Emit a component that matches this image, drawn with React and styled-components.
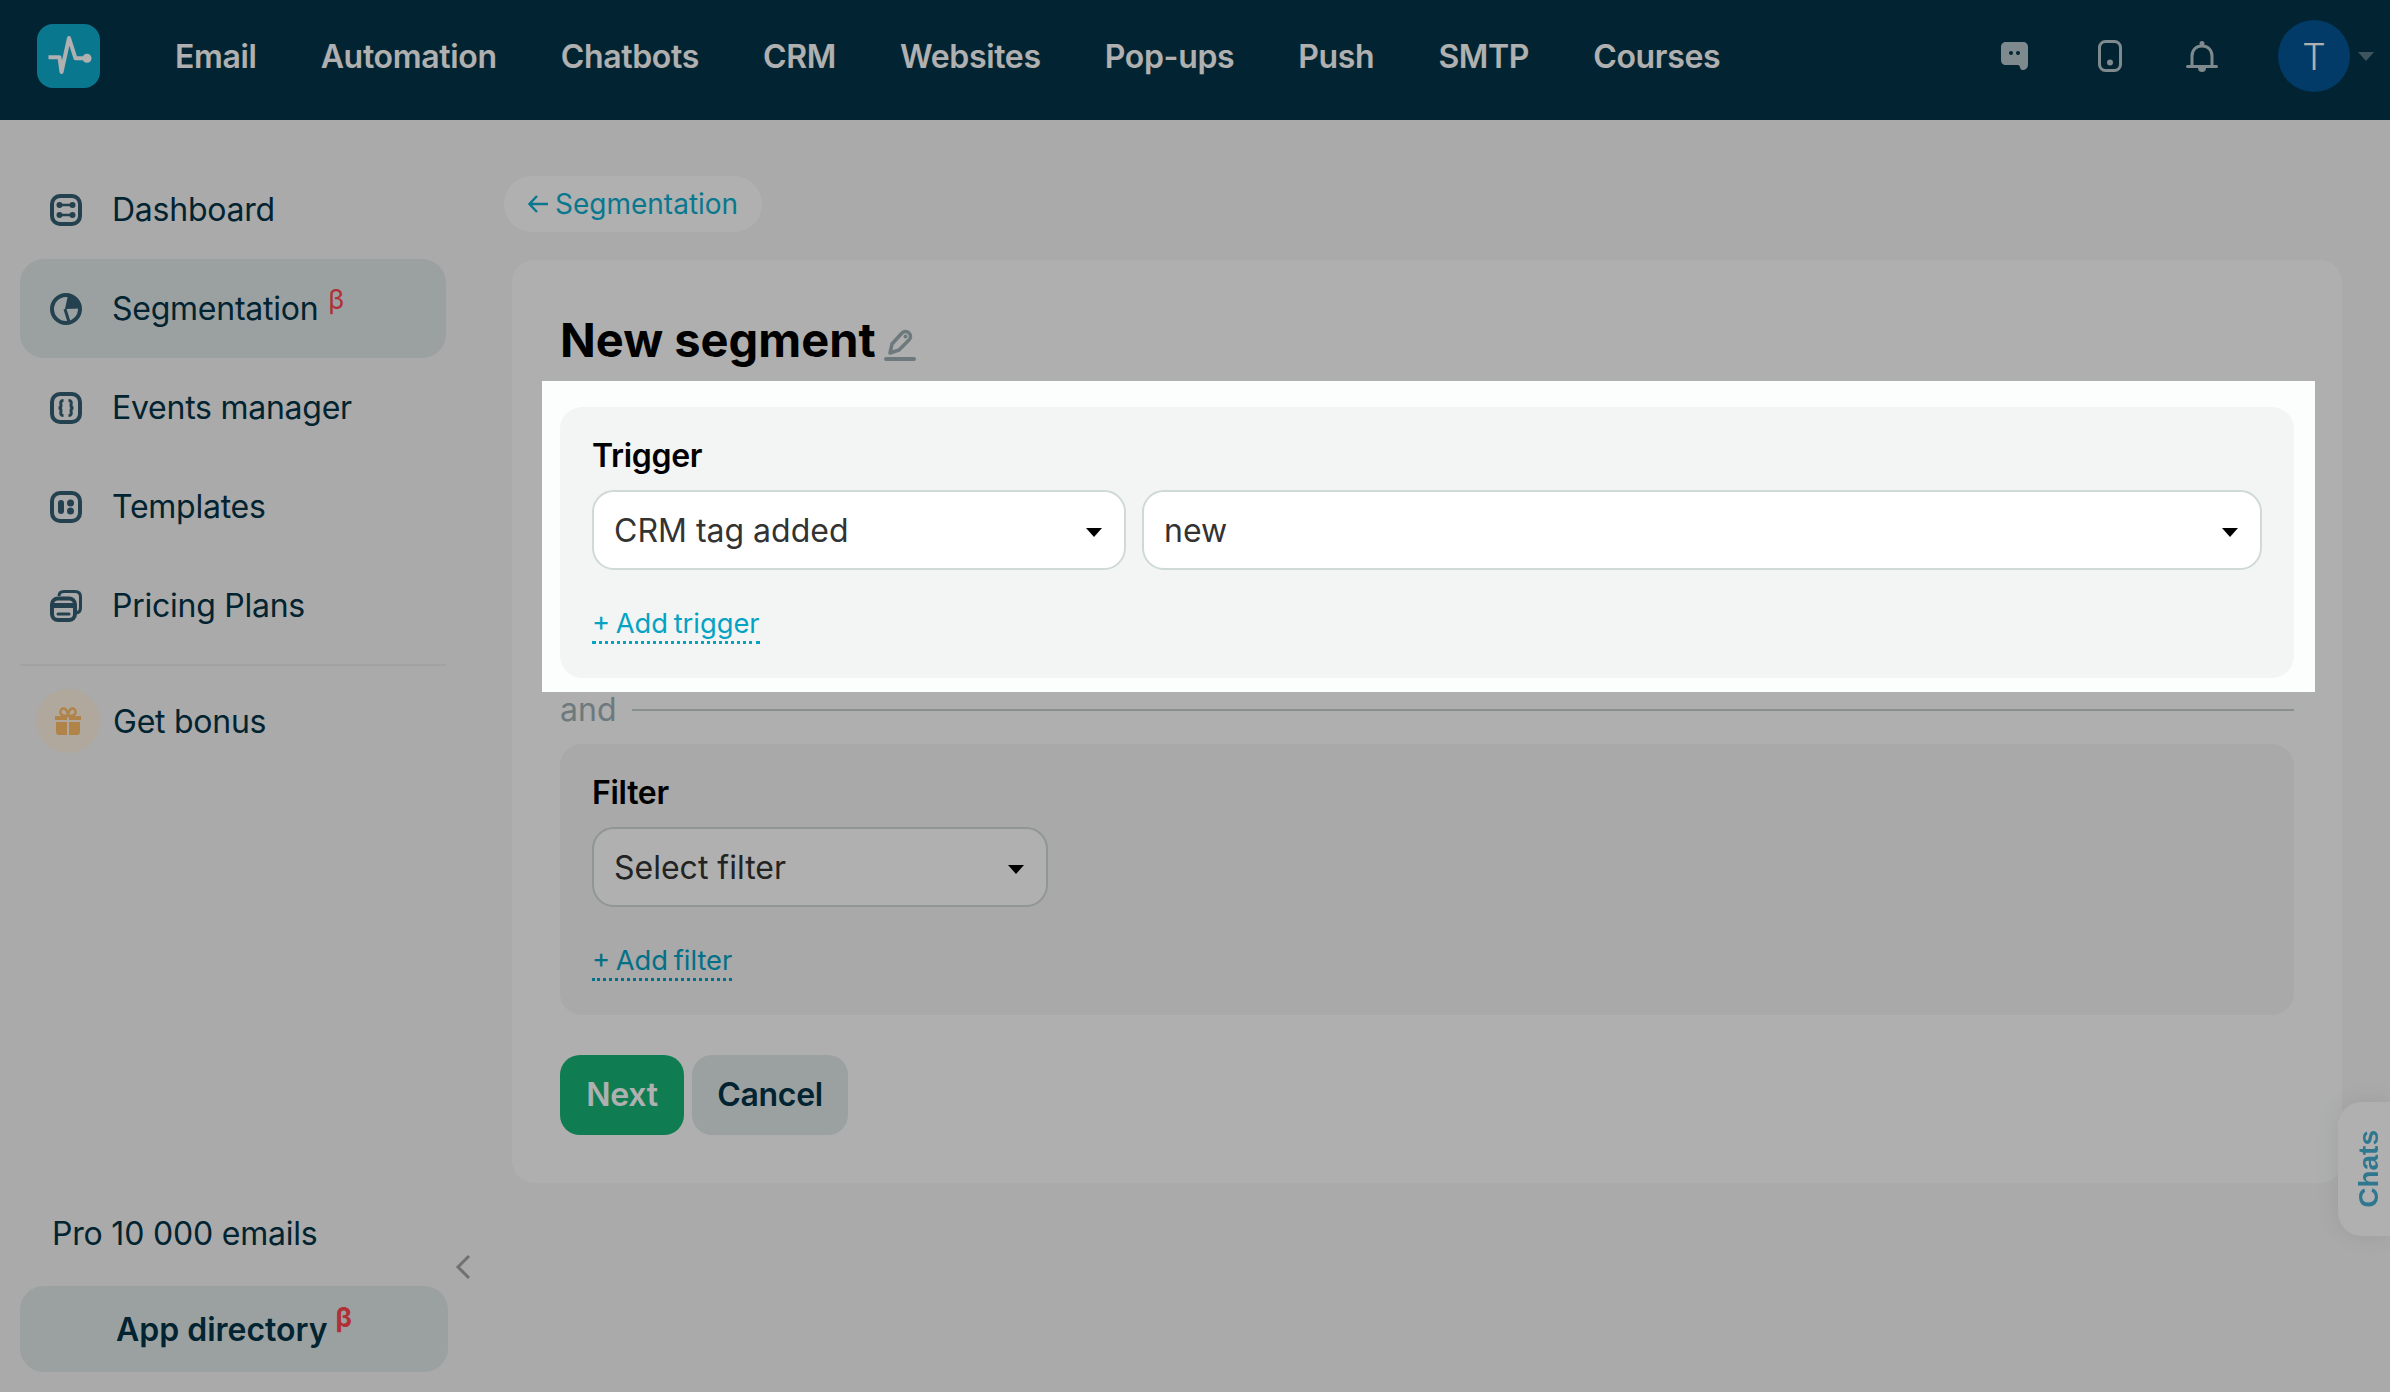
import React from "react";
import styled, { createGlobalStyle } from "styled-components";

const GlobalStyle = createGlobalStyle`
  html, body {
    margin: 0;
    height: 100%;
    overflow: hidden;
    background: #f5f6f5;
    font-family: Inter, "Noto Sans", sans-serif;
    color: #043447;
  }
  * { box-sizing: border-box; }
`;

const Page = styled.div`
  height: 100vh;
  display: flex;
  flex-direction: column;
`;

const TopBar = styled.header`
  height: 120px;
  flex: none;
  display: flex;
  align-items: center;
  padding: 0 16px 8px 37px;
  background: #043447;
`;

const Logo = styled.div`
  width: 63px;
  height: 64px;
  border-radius: 16px;
  background: #0eaecf;
  svg { display: block; }
`;

const TopNav = styled.nav`
  display: flex;
  gap: 64px;
  margin-left: 75px;
`;

const TopLink = styled.a`
  font-size: 32px;
  font-weight: 600;
  letter-spacing: -0.33px;
  color: #fff;
`;

const TopActions = styled.div`
  margin-left: auto;
  display: flex;
  align-items: center;
  gap: 60px;
  color: #b9c8ce;
  svg { display: block; }
`;

const Avatar = styled.div`
  display: flex;
  align-items: center;
  gap: 8px;
`;

const AvatarCircle = styled.div`
  width: 72px;
  height: 72px;
  border-radius: 50%;
  background: #045497;
  color: #fff;
  font-size: 37px;
  font-weight: 300;
  display: flex;
  align-items: center;
  justify-content: center;
`;

const AvatarCaret = styled.span`
  border: 8px solid transparent;
  border-top: 9px solid #5a7b8b;
  border-bottom: 0;
`;

const Body = styled.div`
  flex: 1;
  display: flex;
  min-height: 0;
`;

const Sidebar = styled.aside`
  position: relative;
  width: 466px;
  flex: none;
  display: flex;
  flex-direction: column;
  padding: 40px 20px 20px;
`;

const SideItem = styled.a`
  height: 99px;
  display: flex;
  align-items: center;
  gap: 30px;
  padding-left: 30px;
  border-radius: 24px;
  font-size: 32px;
  letter-spacing: -0.25px;
  background: ${(p) => (p.$active ? "#e1e9e9" : "transparent")};
  svg { flex: none; display: block; color: #355f75; }
`;

const Beta = styled.sup`
  align-self: flex-start;
  margin: 27px 0 0 -20px;
  font-size: 27px;
  line-height: 1;
  color: #ff4651;
  font-weight: ${(p) => (p.$bold ? 700 : 400)};
`;

const SideDivider = styled.div`
  height: 2px;
  margin: 9px 0 0;
  background: #e9ecec;
`;

const BonusItem = styled.a`
  display: flex;
  align-items: center;
  gap: 13px;
  margin-top: 23px;
  padding-left: 16px;
  font-size: 32px;
  letter-spacing: -0.25px;
`;

const BonusCircle = styled.span`
  width: 64px;
  height: 64px;
  border-radius: 50%;
  background: #fff3e4;
  display: flex;
  align-items: center;
  justify-content: center;
  color: #ffc06a;
`;

const PlanName = styled.div`
  margin-top: auto;
  padding-left: 32px;
  font-size: 32px;
  letter-spacing: -0.2px;
  line-height: 40px;
`;

const CollapseToggle = styled.span`
  position: absolute;
  left: 454px;
  top: 1134px;
  color: #a3a6a6;
  svg { display: block; }
`;

const AppDirectory = styled.a`
  margin: 32px -2px 0 0;
  height: 86px;
  border-radius: 24px;
  background: #e1e9e9;
  display: flex;
  align-items: center;
  justify-content: center;
  gap: 8px;
  font-size: 32px;
  font-weight: 600;
  ${Beta} { margin: 18px 0 0 0; }
`;

const Content = styled.main`
  flex: 1;
  min-width: 0;
  padding: 56px 48px 0 38px;
`;

const BackLink = styled.a`
  display: inline-flex;
  align-items: center;
  height: 56px;
  padding: 0 24px;
  gap: 7px;
  border-radius: 28px;
  background: #fff;
  color: #0eaecf;
  font-size: 28px;
  svg { display: block; }
`;

const Card = styled.section`
  margin: 28px 0 0 8px;
  padding: 45px 48px 48px;
  border-radius: 22px;
  background: #fcfefd;
`;

const Title = styled.h1`
  margin: 0 0 32px;
  height: 70px;
  display: flex;
  align-items: center;
  gap: 8px;
  font-size: 47px;
  font-weight: 700;
  line-height: 70px;
  color: #000;
  svg { display: block; margin-top: 9px; color: #9eb0b4; }
`;

const Highlight = styled.div`
  position: relative;
  z-index: 2;
  margin: -26px -21px -14px -18px;
  padding: 26px 21px 14px 18px;
  background: #fcfefd;
  box-shadow: 0 0 0 4000px rgba(0, 0, 0, 0.31);
`;

const Panel = styled.div`
  padding: 29px 32px 34px;
  border-radius: 22px;
  background: #f3f5f4;
`;

const PanelLabel = styled.div`
  font-size: 32px;
  font-weight: 600;
  letter-spacing: -0.3px;
  line-height: 40px;
  color: #000;
`;

const SelectRow = styled.div`
  display: flex;
  gap: 16px;
  margin-top: 14px;
`;

const SelectBox = styled.div`
  flex: ${(p) => (p.$width ? `0 0 ${p.$width}px` : 1)};
  height: 80px;
  display: flex;
  align-items: center;
  justify-content: space-between;
  padding: 0 22px 0 20px;
  border: 2px solid #cfd9d7;
  border-radius: 22px;
  background: #fff;
  font-size: 32px;
  color: #333;
`;

const SelectCaret = styled.span`
  margin-top: 5px;
  border: 8px solid transparent;
  border-top: 9px solid #000;
  border-bottom: 0;
`;

const AddLink = styled.a`
  display: inline-block;
  margin-top: 35px;
  padding-top: 1px;
  font-size: 27.3px;
  word-spacing: -2px;
  line-height: 35px;
  color: #04a3c4;
  border-bottom: 3px dotted #04a3c4;
`;

const AndRow = styled.div`
  display: flex;
  align-items: center;
  gap: 16px;
  height: 42px;
  margin: 11px 0 13px;
  font-size: 32px;
  line-height: 38px;
  color: #a0b0b5;
  &::after {
    content: "";
    flex: 1;
    height: 2px;
    background: #c4cfcf;
  }
`;

const Actions = styled.div`
  display: flex;
  gap: 8px;
  margin-top: 40px;
`;

const Button = styled.button`
  height: 80px;
  width: ${(p) => p.$width}px;
  padding: 0 0 2px;
  border: 0;
  border-radius: 20px;
  font-family: inherit;
  font-size: 32px;
  font-weight: 600;
  letter-spacing: -0.3px;
  color: ${(p) => (p.$primary ? "#fff" : "#043447")};
  background: ${(p) => (p.$primary ? "#16b477" : "#e1e9e9")};
`;

const ChatsTab = styled.div`
  position: fixed;
  z-index: 1;
  right: 0;
  top: 1102px;
  width: 52px;
  height: 134px;
  padding-left: 10px;
  border-radius: 24px 0 0 24px;
  background: #fff;
  box-shadow: 0 0 24px rgba(0, 0, 0, 0.08);
  display: flex;
  align-items: center;
  justify-content: center;
  span {
    writing-mode: vertical-rl;
    transform: rotate(180deg);
    font-family: "Liberation Sans", Arial, sans-serif;
    font-size: 28px;
    font-weight: 700;
    color: #45adcf;
  }
`;

const PulseIcon = () => (
  <svg width="63" height="64" viewBox="0 0 63 64" fill="none">
    <path d="M11.5 33.3H22.5L24.5 48L32 14L38.5 34.3H47" stroke="#fff" strokeWidth="4" strokeLinejoin="round" />
    <circle cx="50" cy="34.3" r="4.5" fill="#fff" />
  </svg>
);

const ChatIcon = () => (
  <svg width="35" height="32" viewBox="0 0 35 32">
    <path d="M7 2H24C27 2 29 4 29 7V24C29 27.5 27.5 30 23.5 30C20.5 30 21.5 25 19 25H7C4 25 2 23 2 20V7C2 4 4 2 7 2Z" fill="currentColor" />
    <circle cx="12" cy="13" r="2" fill="#043447" />
    <circle cx="19" cy="13" r="2" fill="#043447" />
  </svg>
);

const PhoneIcon = () => (
  <svg width="32" height="32" viewBox="0 0 32 32" fill="none">
    <rect x="5.5" y="1.5" width="21" height="29" rx="6" stroke="currentColor" strokeWidth="3" />
    <circle cx="16" cy="22.5" r="3" fill="currentColor" />
  </svg>
);

const BellIcon = () => (
  <svg width="32" height="32" viewBox="0 0 32 32" fill="none">
    <path d="M6 26V16C6 10 10 6 16 6C22 6 26 10 26 16V26" stroke="currentColor" strokeWidth="3" />
    <path d="M1.5 26.5H30.5" stroke="currentColor" strokeWidth="3" strokeLinecap="round" />
    <circle cx="16" cy="3.5" r="2.5" fill="currentColor" />
    <path d="M12 28H20C20 31 18 32 16 32C14 32 12 31 12 28Z" fill="currentColor" />
  </svg>
);

const DashboardIcon = () => (
  <svg width="32" height="32" viewBox="0 0 32 32" fill="none">
    <rect x="2" y="2" width="28" height="28" rx="8" stroke="currentColor" strokeWidth="4" />
    <path d="M10 11H22M10 21H22" stroke="currentColor" strokeWidth="2.5" />
    <circle cx="9.5" cy="11" r="3" fill="currentColor" />
    <circle cx="22.500" cy="11" r="3" fill="currentColor" />
    <circle cx="9.5" cy="21" r="3" fill="currentColor" />
    <circle cx="22.500" cy="21" r="3" fill="currentColor" />
  </svg>
);

const SegmentIcon = () => (
  <svg width="32" height="32" viewBox="0 0 32 32" fill="none">
    <circle cx="16" cy="16" r="14" stroke="currentColor" strokeWidth="4" />
    <path d="M18 2C26 3 30 9 30.5 15.5L15 16L18 2Z" fill="currentColor" />
    <path d="M15 16L19 29" stroke="currentColor" strokeWidth="3" />
  </svg>
);

const EventsIcon = () => (
  <svg width="32" height="32" viewBox="0 0 32 32" fill="none">
    <rect x="2" y="2" width="28" height="28" rx="8" stroke="currentColor" strokeWidth="4" />
    <path d="M13.5 8.500C9.500 8.500 11 12 11 13.500C11 15 10 16 8.500 16C10 16 11 17 11 18.500C11 20 9.500 23.500 13.500 23.500" stroke="currentColor" strokeWidth="3" />
    <path d="M18.500 8.500C22.500 8.500 21 12 21 13.500C21 15 22 16 23.500 16C22 16 21 17 21 18.500C21 20 22.500 23.500 18.500 23.500" stroke="currentColor" strokeWidth="3" />
  </svg>
);

const TemplatesIcon = () => (
  <svg width="32" height="32" viewBox="0 0 32 32" fill="none">
    <rect x="2" y="2" width="28" height="28" rx="8" stroke="currentColor" strokeWidth="4" />
    <rect x="8" y="9" width="6" height="14" rx="3" fill="currentColor" />
    <circle cx="20.500" cy="12" r="3.500" fill="currentColor" />
    <circle cx="20.500" cy="20" r="3.500" fill="currentColor" />
  </svg>
);

const PricingIcon = () => (
  <svg width="32" height="32" viewBox="0 0 32 32" fill="none">
    <path d="M9 6C9 3 11 1.500 14 1.500H25C28.500 1.500 30.500 3.500 30.500 7V18C30.500 21 29 22.500 27 23" stroke="currentColor" strokeWidth="3" />
    <rect x="2" y="8.500" width="23" height="21.500" rx="6" stroke="currentColor" strokeWidth="4" />
    <path d="M2 13H25V18H2Z" fill="currentColor" />
    <path d="M8 24H19" stroke="currentColor" strokeWidth="3" strokeLinecap="round" />
  </svg>
);

const GiftIcon = () => (
  <svg width="28" height="28" viewBox="0 0 28 28" fill="currentColor">
    <path d="M1 9H13V13H1ZM15 9H27V13H15ZM2 15H13V28H5C3 28 2 27 2 25ZM15 15H26V25C26 27 25 28 23 28H15Z" />
    <path d="M14 9C11 9 7 9 6.500 6C6 3 8 1 10 1.500C12 2 14 5 14 9ZM14 9C14 5 16 2 18 1.500C20 1 22 3 21.500 6C21 9 17 9 14 9Z" fill="none" stroke="currentColor" strokeWidth="2.5" />
  </svg>
);

const PencilIcon = () => (
  <svg width="32" height="32" viewBox="0 0 32 32" fill="none">
    <path d="M6 24L8 15L18 4C20 2 23 2 25 4C27 6 27 9 25 11L15 21L6 24Z" stroke="currentColor" strokeWidth="3.500" strokeLinejoin="round" />
    <circle cx="21.500" cy="7.500" r="2" fill="currentColor" />
    <path d="M2 30H30" stroke="currentColor" strokeWidth="4" strokeLinecap="round" />
  </svg>
);

const BackArrow = () => (
  <svg width="20" height="18" viewBox="0 0 20 18" fill="none">
    <path d="M9 1L1.500 9L9 17M2 9H20" stroke="currentColor" strokeWidth="2.4" />
  </svg>
);

const ChevronLeft = () => (
  <svg width="18" height="26" viewBox="0 0 18 26" fill="none">
    <path d="M15 2L4 13L15 24" stroke="currentColor" strokeWidth="3" />
  </svg>
);

const topLinks = ["Email", "Automation", "Chatbots", "CRM", "Websites", "Pop-ups", "Push", "SMTP", "Courses"];

const sideLinks = [
  { label: "Dashboard", icon: <DashboardIcon /> },
  { label: "Segmentation", icon: <SegmentIcon />, active: true, beta: true },
  { label: "Events manager", icon: <EventsIcon /> },
  { label: "Templates", icon: <TemplatesIcon /> },
  { label: "Pricing Plans", icon: <PricingIcon /> },
];

export default function App() {
  return (
    <Page>
      <GlobalStyle />
      <TopBar>
        <Logo>
          <PulseIcon />
        </Logo>
        <TopNav>
          {topLinks.map((link) => (
            <TopLink key={link}>{link}</TopLink>
          ))}
        </TopNav>
        <TopActions>
          <ChatIcon />
          <PhoneIcon />
          <BellIcon />
          <Avatar>
            <AvatarCircle>T</AvatarCircle>
            <AvatarCaret />
          </Avatar>
        </TopActions>
      </TopBar>
      <Body>
        <Sidebar>
          {sideLinks.map((item) => (
            <SideItem key={item.label} $active={item.active}>
              {item.icon}
              {item.label}
              {item.beta && <Beta>β</Beta>}
            </SideItem>
          ))}
          <SideDivider />
          <BonusItem>
            <BonusCircle>
              <GiftIcon />
            </BonusCircle>
            Get bonus
          </BonusItem>
          <PlanName>Pro 10 000 emails</PlanName>
          <CollapseToggle>
            <ChevronLeft />
          </CollapseToggle>
          <AppDirectory>
            App directory
            <Beta $bold>β</Beta>
          </AppDirectory>
        </Sidebar>
        <Content>
          <BackLink>
            <BackArrow />
            Segmentation
          </BackLink>
          <Card>
            <Title>
              New segment
              <PencilIcon />
            </Title>
            <Highlight>
              <Panel>
                <PanelLabel>Trigger</PanelLabel>
                <SelectRow>
                  <SelectBox $width={534}>
                    CRM tag added
                    <SelectCaret />
                  </SelectBox>
                  <SelectBox>
                    new
                    <SelectCaret />
                  </SelectBox>
                </SelectRow>
                <AddLink>+ Add trigger</AddLink>
              </Panel>
            </Highlight>
            <AndRow>and</AndRow>
            <Panel>
              <PanelLabel>Filter</PanelLabel>
              <SelectRow>
                <SelectBox $width={456}>
                  Select filter
                  <SelectCaret />
                </SelectBox>
              </SelectRow>
              <AddLink>+ Add filter</AddLink>
            </Panel>
            <Actions>
              <Button $primary $width={124}>Next</Button>
              <Button $width={156}>Cancel</Button>
            </Actions>
          </Card>
        </Content>
      </Body>
      <ChatsTab>
        <span>Chats</span>
      </ChatsTab>
    </Page>
  );
}
